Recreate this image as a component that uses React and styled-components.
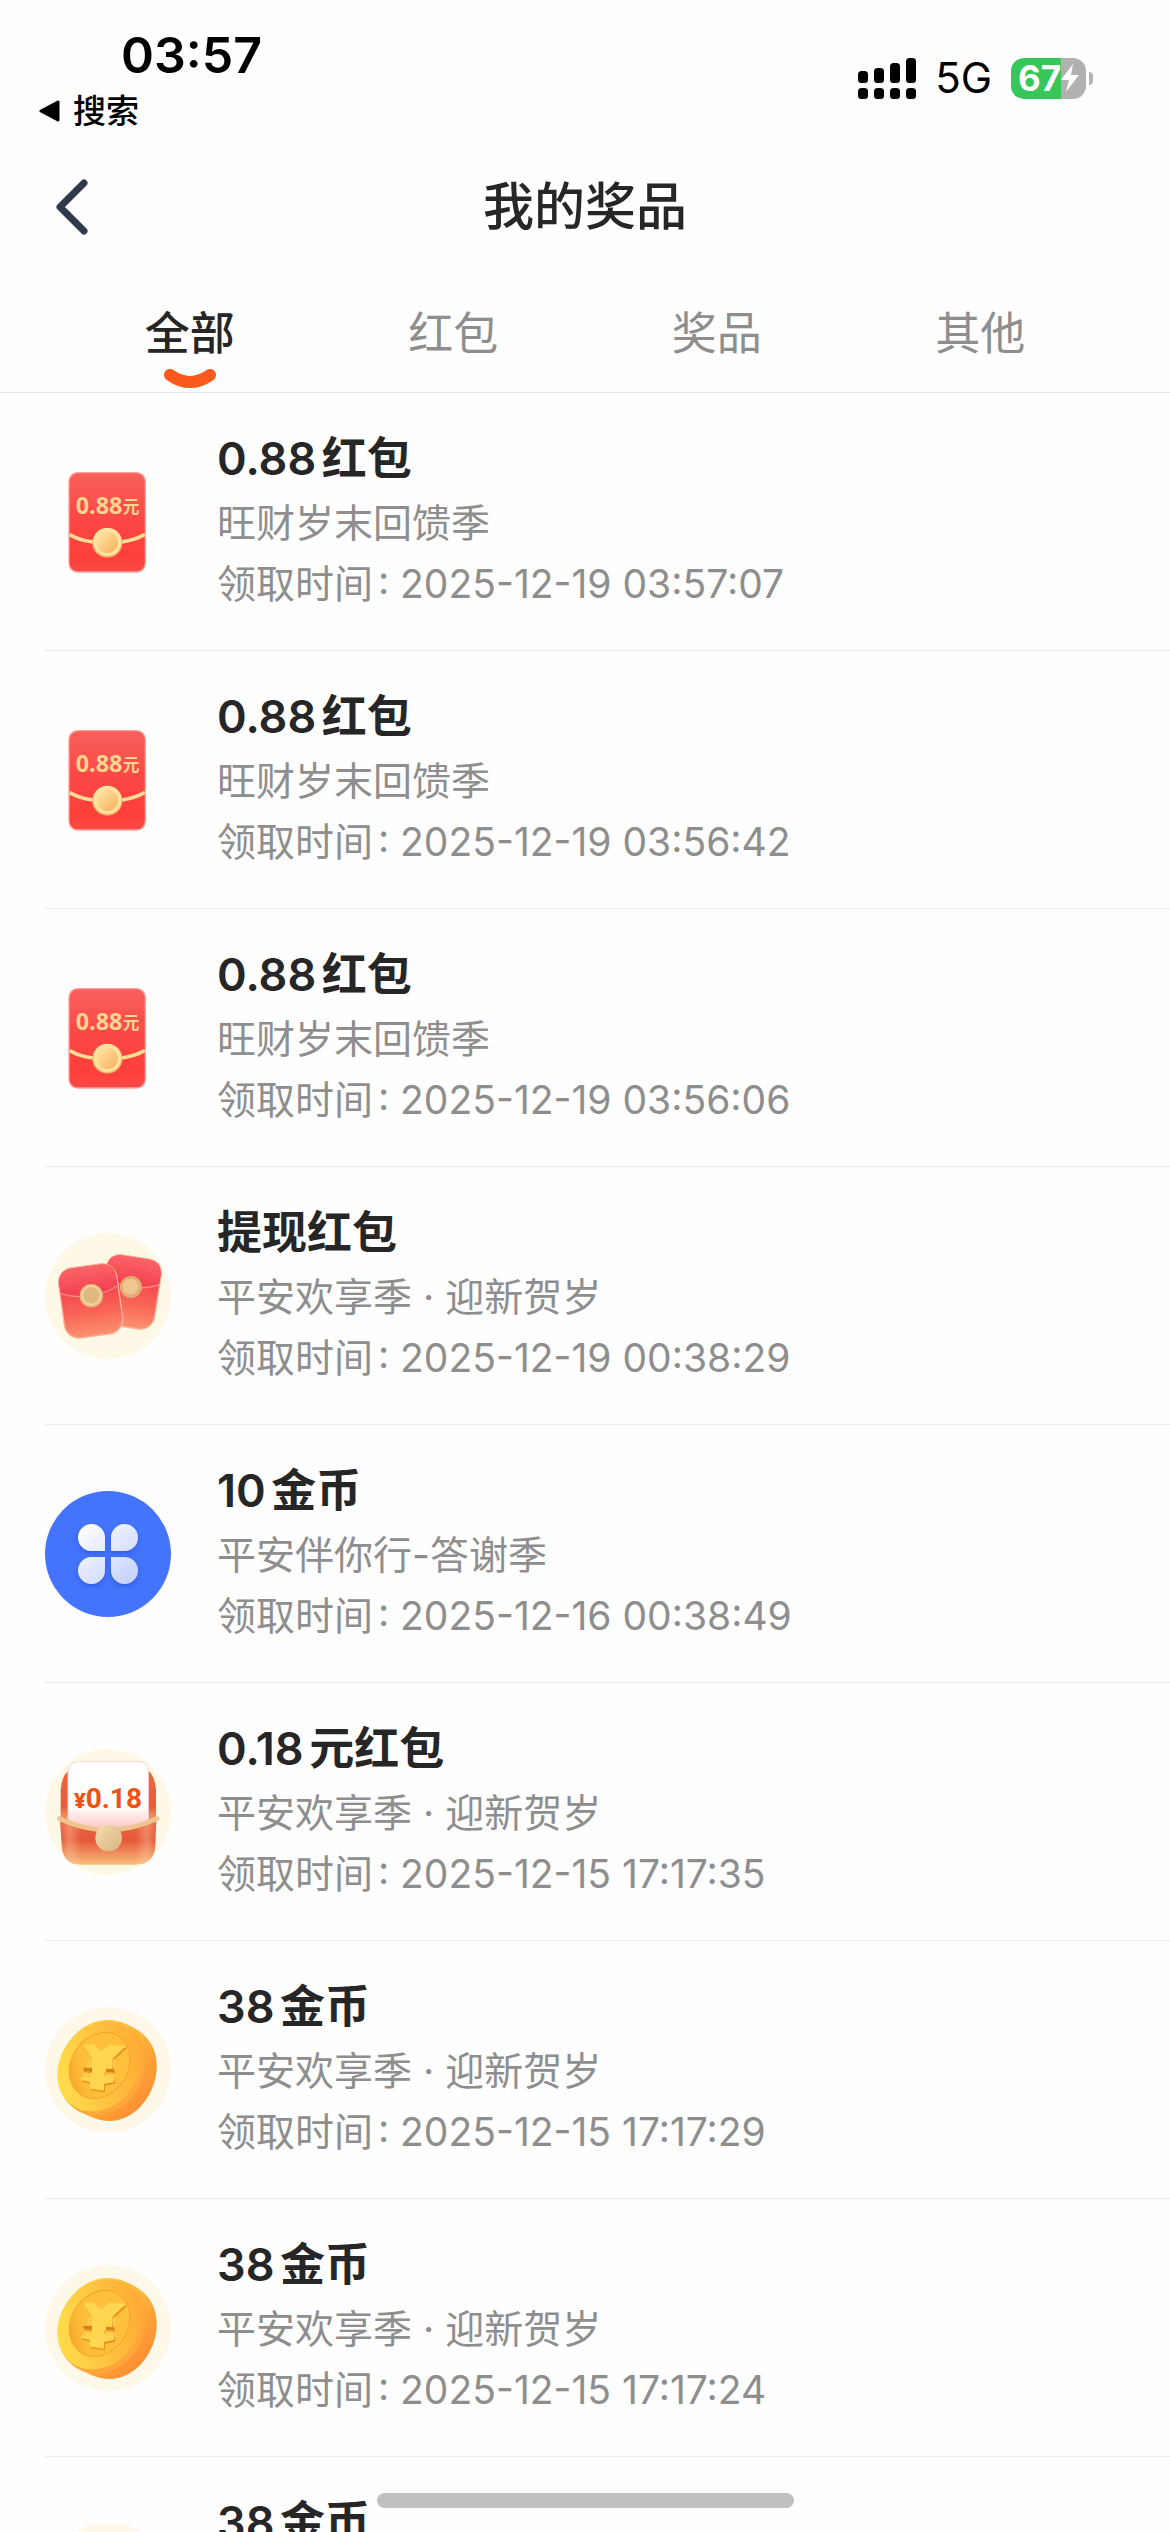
import React, { useState } from "react";
import styled, { createGlobalStyle } from "styled-components";

const GlobalStyle = createGlobalStyle`
  *, *::before, *::after { box-sizing: border-box; }
  body {
    margin: 0;
    background: #fefefe;
    color: #262626;
    font-family: Inter, "Noto Sans CJK SC", sans-serif;
    text-autospace: normal;
  }
`;

const Screen = styled.div`
  display: flex;
  flex-direction: column;
  height: 100vh;
  overflow: hidden;
`;

const StatusBar = styled.div`
  display: flex;
  justify-content: space-between;
  padding: 24px 77px 0 39px;
  height: 141px;
  color: #000;
`;

const StatusLeft = styled.div`
  display: flex;
  flex-direction: column;
  align-items: flex-start;
`;

const Clock = styled.time`
  margin-left: 82px;
  font-size: 50px;
  font-weight: 600;
  line-height: 62px;
`;

const ReturnLink = styled.a`
  display: flex;
  align-items: center;
  gap: 12px;
  color: inherit;
  font-size: 33px;
  font-weight: 500;
  line-height: 50px;
  text-decoration: none;
`;

const StatusRight = styled.div`
  display: flex;
  align-items: center;
  gap: 19px;
  height: 108px;
`;

const Network = styled.span`
  font-size: 42px;
  line-height: 50px;
`;

const Battery = styled.div`
  display: flex;
  align-items: center;
  gap: 3px;

  &::after {
    content: "";
    width: 4px;
    height: 13px;
    border-radius: 0 6px 6px 0;
    background: #b4b4b4;
  }
`;

const BatteryBody = styled.div`
  display: flex;
  align-items: center;
  justify-content: center;
  width: 75px;
  height: 41px;
  border-radius: 13px;
  background: linear-gradient(to right, #35c759 67%, #b1b1b1 67%);
  color: #fff;
  font-size: 35px;
  font-weight: 700;
  line-height: 41px;
`;

const NavBar = styled.header`
  display: grid;
  grid-template-columns: 120px 1fr 120px;
  align-items: center;
  height: 132px;
`;

const BackButton = styled.button`
  display: flex;
  align-items: center;
  height: 90px;
  padding: 0 0 0 54px;
  border: 0;
  background: none;
  cursor: pointer;
`;

const Title = styled.h1`
  margin: 0;
  font-size: 51px;
  font-weight: 500;
  line-height: 72px;
  text-align: center;
`;

const Tabs = styled.nav`
  display: flex;
  height: 120px;
  padding: 0 58px;
  border-bottom: 1px solid #e6e6e6;
`;

const Tab = styled.button`
  display: flex;
  flex: 1;
  flex-direction: column;
  align-items: center;
  gap: 2px;
  padding: 28px 0 0;
  border: 0;
  background: none;
  color: ${(p) => (p.$active ? "#262626" : "#8e8e8e")};
  font: inherit;
  font-size: 45px;
  font-weight: ${(p) => (p.$active ? 500 : 400)};
  line-height: 66px;
  cursor: pointer;
`;

const List = styled.ul`
  flex: 1;
  min-height: 0;
  margin: 0;
  padding: 0 0 0 45px;
  overflow: hidden;
  list-style: none;
`;

const Row = styled.li`
  display: flex;
  align-items: center;
  gap: 46px;
  height: 258px;
  border-bottom: 1px solid #ebebeb;

  > svg { flex: none; }
`;

const Info = styled.div`
  padding-bottom: 4px;
`;

const Name = styled.h2`
  margin: 0;
  font-size: 45px;
  font-weight: 600;
  line-height: 66px;
`;

const Detail = styled.p`
  margin: 0;
  color: #8e8e8e;
  font-size: 39px;
  line-height: 61px;
`;

const HomeIndicator = styled.div`
  position: fixed;
  bottom: 24px;
  left: 50%;
  width: 417px;
  height: 15px;
  margin-left: -208px;
  border-radius: 8px;
  background: #c0c0c0;
`;

function SignalIcon() {
  const tops = [13, 10, 5, 0];
  return (
    <svg width="58" height="41" viewBox="0 0 58 41" aria-hidden="true">
      {tops.map((top, i) => (
        <g key={i}>
          <rect x={i * 16} y={top} width="10" height={25 - top} rx="3.5" />
          <rect x={i * 16} y="30" width="10" height="11" rx="3.5" />
        </g>
      ))}
    </svg>
  );
}

function Coupon({ id }) {
  return (
    <svg width="126" height="126" viewBox="45 57 378 378" aria-hidden="true">
      <defs>
        <linearGradient id={`${id}a`} x1="0" y1="0" x2="0" y2="1">
          <stop offset="0" stopColor="#f9605c" />
          <stop offset="0.5" stopColor="#fb4644" />
          <stop offset="0.85" stopColor="#fe3f3a" />
          <stop offset="1" stopColor="#fb4b46" />
        </linearGradient>
        <linearGradient id={`${id}b`} x1="0" y1="0" x2="1" y2="1">
          <stop offset="0" stopColor="#ffe9a8" />
          <stop offset="1" stopColor="#f9ae5c" />
        </linearGradient>
      </defs>
      <rect x="117" y="98" width="229" height="298" rx="26" fill={`url(#${id}a)`} stroke="#fba19a" strokeWidth="4" />
      <path d="M119 284Q150 302 190 306M275 306Q315 300 345 283" fill="none" stroke="#ffdc94" strokeWidth="11" />
      <circle cx="232" cy="308" r="45" fill="#f7b268" />
      <circle cx="232" cy="306" r="42" fill="#ffe3a0" />
      <circle cx="232" cy="307" r="32" fill={`url(#${id}b)`} />
      <text x="137" y="221" fill="#ffd590" fontFamily="Open Sans, sans-serif" fontWeight="700" fontSize="70">0.88</text>
      <text x="278" y="219" fill="#ffd590" fontFamily="Noto Sans CJK SC, sans-serif" fontWeight="700" fontSize="50">元</text>
    </svg>
  );
}

function Envelopes({ id }) {
  const pocket = (
    <>
      <rect width="176" height="212" rx="44" fill={`url(#${id}a)`} stroke="#fbb29a" strokeWidth="4" />
      <path d="M2 72V44Q2 2 44 2H132Q174 2 174 44V72Q88 112 2 72Z" fill={`url(#${id}b)`} />
      <path d="M2 72Q88 112 174 72" fill="none" stroke="#fb8a83" strokeWidth="4" />
    </>
  );
  return (
    <svg width="126" height="126" viewBox="45 69 378 378" aria-hidden="true">
      <defs>
        <linearGradient id={`${id}a`} x1="0" y1="0" x2="0" y2="1">
          <stop offset="0.3" stopColor="#f4434e" />
          <stop offset="0.7" stopColor="#f96a58" />
          <stop offset="1" stopColor="#fb9270" />
        </linearGradient>
        <linearGradient id={`${id}b`} x1="0" y1="0" x2="0" y2="1">
          <stop offset="0" stopColor="#fb6468" />
          <stop offset="1" stopColor="#f33c4c" />
        </linearGradient>
      </defs>
      <circle cx="234" cy="258" r="189" fill="#fef8e6" />
      <g transform="translate(235 128) rotate(9) scale(.95 1)">{pocket}</g>
      <circle cx="303" cy="231" r="33" fill="#e3ac74" />
      <circle cx="302" cy="230" r="24" fill="#efc68f" />
      <g transform="translate(80 180) rotate(-8)">{pocket}</g>
      <circle cx="184" cy="257" r="35" fill="#e9bb80" />
      <circle cx="184" cy="256" r="30" fill="#f3d49c" />
      <circle cx="184" cy="256" r="25" fill="#deb880" />
    </svg>
  );
}

function Clover({ id }) {
  return (
    <svg width="126" height="126" viewBox="45 63 378 378" aria-hidden="true">
      <defs>
        <linearGradient id={`${id}a`} gradientUnits="userSpaceOnUse" x1="150" y1="165" x2="310" y2="345">
          <stop offset="0" stopColor="#ffffff" />
          <stop offset="1" stopColor="#c3d0fb" />
        </linearGradient>
        <filter id={`${id}f`} x="-20%" y="-20%" width="140%" height="150%">
          <feDropShadow dx="0" dy="7" stdDeviation="6" floodColor="#1f49c8" floodOpacity="0.55" />
        </filter>
      </defs>
      <circle cx="234" cy="252" r="189" fill="#4374fb" />
      <g fill={`url(#${id}a)`} filter={`url(#${id}f)`}>
        <path d="M225 243H184A40.500 40.500 0 1 1 225 202Z" />
        <path d="M243 243V202A40.500 40.500 0 1 1 284 243Z" />
        <path d="M225 261V302A40.500 40.500 0 1 1 184 261Z" />
        <path d="M243 261H284A40.500 40.500 0 1 1 243 302Z" />
      </g>
    </svg>
  );
}

function CashEnvelope({ id }) {
  return (
    <svg width="126" height="126" viewBox="45 57 378 378" aria-hidden="true">
      <defs>
        <linearGradient id={`${id}a`} x1="0" y1="0" x2="0" y2="1">
          <stop offset="0" stopColor="#ee6a3c" />
          <stop offset="0.7" stopColor="#e95a3a" />
          <stop offset="1" stopColor="#f8b273" />
        </linearGradient>
        <linearGradient id={`${id}b`} x1="0" y1="0" x2="0" y2="1">
          <stop offset="0.6" stopColor="#ffffff" />
          <stop offset="1" stopColor="#fdb8b4" />
        </linearGradient>
        <linearGradient id={`${id}c`} x1="0" y1="0" x2="0" y2="1">
          <stop offset="0" stopColor="#ea6a48" />
          <stop offset="0.45" stopColor="#e65838" />
          <stop offset="1" stopColor="#fabd7c" />
        </linearGradient>
        <linearGradient id={`${id}d`} x1="0" y1="0" x2="1" y2="1">
          <stop offset="0" stopColor="#f6dcae" />
          <stop offset="1" stopColor="#d8b380" />
        </linearGradient>
        <linearGradient id={`${id}e`} x1="0" y1="0" x2="1" y2="0">
          <stop offset="0" stopColor="#ffd0a8" stopOpacity="0" />
          <stop offset="0.1" stopColor="#ffd0a8" stopOpacity="0.35" />
          <stop offset="0.22" stopColor="#ffd0a8" stopOpacity="0" />
          <stop offset="0.78" stopColor="#ffd0a8" stopOpacity="0" />
          <stop offset="0.9" stopColor="#ffd0a8" stopOpacity="0.35" />
          <stop offset="1" stopColor="#ffd0a8" stopOpacity="0" />
        </linearGradient>
      </defs>
      <circle cx="234" cy="246" r="189" fill="#fef8e6" />
      <path d="M92 180Q96 118 140 110H330Q374 118 378 180V280H92Z" fill={`url(#${id}a)`} />
      <rect x="114" y="95" width="241" height="220" rx="28" fill={`url(#${id}b)`} stroke="#fbd3cf" strokeWidth="3" />
      <path d="M90 270Q234 332 379 270L376 345Q374 404 315 404H153Q98 404 95 345Z" fill={`url(#${id}c)`} />
      <path d="M90 270Q234 332 379 270L376 345Q374 404 315 404H153Q98 404 95 345Z" fill={`url(#${id}e)`} />
      <path d="M88 266Q234 334 381 266" fill="none" stroke="#efc491" strokeWidth="14" strokeLinecap="round" />
      <circle cx="236" cy="324" r="40" fill={`url(#${id}d)`} />
      <text x="131" y="233" fill="#ee5215" fontFamily="Open Sans, sans-serif" fontWeight="800" fontSize="62">¥</text>
      <text x="167" y="234" fill="#ee5215" fontFamily="Liberation Sans Narrow, Roboto, sans-serif" fontWeight="700" fontSize="84">0.18</text>
    </svg>
  );
}

function Coin({ id }) {
  const yen = "M160 164L190 163L213 183L237 165L288 168L246 208V235L252 237V246L222 248V260L252 263V276L222 282V302L180 296V276L154 270V262L184 258V246L160 242V233L186 230V206Z";
  return (
    <svg width="126" height="126" viewBox="45 51 378 378" aria-hidden="true">
      <defs>
        <linearGradient id={`${id}a`} x1="0" y1="0" x2="1" y2="1">
          <stop offset="0" stopColor="#ffd84a" />
          <stop offset="0.5" stopColor="#feb338" />
          <stop offset="1" stopColor="#fb7f30" />
        </linearGradient>
        <linearGradient id={`${id}b`} gradientUnits="userSpaceOnUse" x1="100" y1="120" x2="320" y2="340">
          <stop offset="0" stopColor="#ffe24e" />
          <stop offset="1" stopColor="#ffa632" />
        </linearGradient>
        <linearGradient id={`${id}c`} gradientUnits="userSpaceOnUse" x1="130" y1="150" x2="290" y2="300">
          <stop offset="0" stopColor="#f5a02a" />
          <stop offset="0.25" stopColor="#fdbd38" />
          <stop offset="1" stopColor="#ffc23c" />
        </linearGradient>
      </defs>
      <circle cx="234" cy="240" r="189" fill="#fef8e8" />
      <path d="M230 90C262 90 290 100 318 117C362 144 382 184 380 236C377 310 318 392 238 393C205 393 178 380 150 364C108 338 84 310 85 252C88 170 150 92 230 90Z" fill={`url(#${id}a)`} />
      <ellipse cx="216" cy="238" rx="144" ry="124" transform="rotate(-55 216 238)" fill="#fda63a" />
      <ellipse cx="208" cy="230" rx="142" ry="118" transform="rotate(-55 208 230)" fill={`url(#${id}b)`} />
      <ellipse cx="209" cy="226" rx="104" ry="85" transform="rotate(-58 209 226)" fill={`url(#${id}c)`} stroke="#f3a52c" strokeWidth="3" />
      <path d={yen} fill="#e88e1c" transform="translate(3 5)" />
      <path d={yen} fill="#ffd650" />
      <path d="M160 233H186V246L160 242ZM228 236L252 237V246L228 247Z" fill="#d9821a" />
      <path d="M172 206H258V232H172ZM160 248H252V276L160 272Z" fill="#ffd650" opacity="0.55" />
    </svg>
  );
}

const icons = { coupon: Coupon, envelopes: Envelopes, clover: Clover, cash: CashEnvelope, coin: Coin };

const prizes = [
  { icon: "coupon", name: "0.88红包", event: "旺财岁末回馈季", time: "2025-12-19 03:57:07" },
  { icon: "coupon", name: "0.88红包", event: "旺财岁末回馈季", time: "2025-12-19 03:56:42" },
  { icon: "coupon", name: "0.88红包", event: "旺财岁末回馈季", time: "2025-12-19 03:56:06" },
  { icon: "envelopes", name: "提现红包", event: "平安欢享季 · 迎新贺岁", time: "2025-12-19 00:38:29" },
  { icon: "clover", name: "10金币", event: "平安伴你行-答谢季", time: "2025-12-16 00:38:49" },
  { icon: "cash", name: "0.18元红包", event: "平安欢享季 · 迎新贺岁", time: "2025-12-15 17:17:35" },
  { icon: "coin", name: "38金币", event: "平安欢享季 · 迎新贺岁", time: "2025-12-15 17:17:29" },
  { icon: "coin", name: "38金币", event: "平安欢享季 · 迎新贺岁", time: "2025-12-15 17:17:24" },
  { icon: "coin", name: "38金币" },
];

const tabs = ["全部", "红包", "奖品", "其他"];

export default function App() {
  const [active, setActive] = useState(0);
  return (
    <Screen lang="zh-CN">
      <GlobalStyle />
      <StatusBar>
        <StatusLeft>
          <Clock>03:57</Clock>
          <ReturnLink href="#search">
            <svg width="22" height="22" viewBox="0 0 22 22" aria-hidden="true">
              <path d="M2 11L19 2V20Z" stroke="#000" strokeWidth="3" strokeLinejoin="round" />
            </svg>
            搜索
          </ReturnLink>
        </StatusLeft>
        <StatusRight>
          <SignalIcon />
          <Network>5G</Network>
          <Battery>
            <BatteryBody>
              67
              <svg width="18" height="28" viewBox="0 0 18 28" aria-hidden="true">
                <path d="M12 0L0 16H8L5 28L18 11H10Z" fill="#fff" />
              </svg>
            </BatteryBody>
          </Battery>
        </StatusRight>
      </StatusBar>
      <NavBar>
        <BackButton type="button" aria-label="返回">
          <svg width="36" height="60" viewBox="0 0 36 60" fill="none" stroke="#2f394d" strokeWidth="7" strokeLinecap="round" strokeLinejoin="round">
            <path d="M30 6L6 30L30 54" />
          </svg>
        </BackButton>
        <Title>我的奖品</Title>
      </NavBar>
      <Tabs>
        {tabs.map((label, i) => (
          <Tab key={label} type="button" $active={i === active} onClick={() => setActive(i)}>
            {label}
            {i === active && (
              <svg width="52" height="20" viewBox="0 0 52 20" aria-hidden="true">
                <path d="M6 6Q26 20 46 6" fill="none" stroke="#fc5a1c" strokeWidth="12" strokeLinecap="round" />
              </svg>
            )}
          </Tab>
        ))}
      </Tabs>
      <List>
        {prizes.map((prize, i) => {
          const Icon = icons[prize.icon];
          return (
            <Row key={i}>
              <Icon id={`prize${i}`} />
              <Info>
                <Name>{prize.name}</Name>
                <Detail>{prize.event || "\u00a0"}</Detail>
                <Detail>{prize.time ? `领取时间: ${prize.time}` : "\u00a0"}</Detail>
              </Info>
            </Row>
          );
        })}
      </List>
      <HomeIndicator />
    </Screen>
  );
}
